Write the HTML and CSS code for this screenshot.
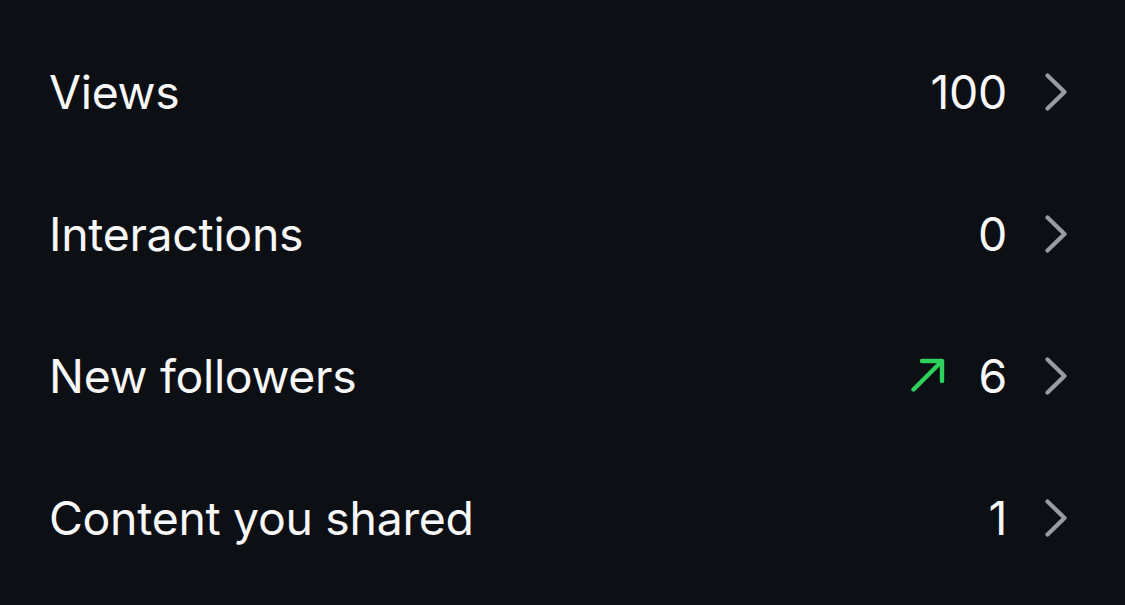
FILE: index.html
```html
<!DOCTYPE html>
<html lang="en">
<head>
    <meta charset="UTF-8">
    <meta name="viewport" content="width=device-width, initial-scale=1.0">
    <title>insights</title>
    <link rel="stylesheet" href="styles.css">
</head>
<body>
    <div class="stats-list">
        <div class="stat-row">
            <span class="stat-label">Views</span>
            <div class="stat-right">
                <span class="stat-value">100</span>
                <svg class="chevron" viewBox="0 0 22 38"><path d="M2.5 2.5 L19.5 19 L2.5 35.5"/></svg>
            </div>
        </div>
        <div class="stat-row">
            <span class="stat-label">Interactions</span>
            <div class="stat-right">
                <span class="stat-value">0</span>
                <svg class="chevron" viewBox="0 0 22 38"><path d="M2.5 2.5 L19.5 19 L2.5 35.5"/></svg>
            </div>
        </div>
        <div class="stat-row">
            <span class="stat-label">New followers</span>
            <div class="stat-right">
                <svg class="trend-up" viewBox="0 0 34 34"><path d="M2.5 31.5 L31 3 M11 3 L31 3 L31 23"/></svg>
                <span class="stat-value">6</span>
                <svg class="chevron" viewBox="0 0 22 38"><path d="M2.5 2.5 L19.5 19 L2.5 35.5"/></svg>
            </div>
        </div>
        <div class="stat-row">
            <span class="stat-label">Content you shared</span>
            <div class="stat-right">
                <span class="stat-value">1</span>
                <svg class="chevron" viewBox="0 0 22 38"><path d="M2.5 2.5 L19.5 19 L2.5 35.5"/></svg>
            </div>
        </div>
    </div>
</body>
</html>
```

FILE: styles.css
```css
body {
    margin: 0;
    background-color: #0c0f14;
    color: #f7f7f8;
    font-family: Inter, "Noto Sans", sans-serif;
}

.stats-list {
    display: flex;
    flex-direction: column;
    padding-top: 21px;
}

.stat-row {
    display: flex;
    align-items: center;
    justify-content: space-between;
    height: 142px;
    padding: 0 58px 0 49px;
}

.stat-label,
.stat-value {
    font-size: 46.4px;
    font-weight: 400;
    letter-spacing: -0.3px;
}

.stat-right {
    display: flex;
    align-items: center;
}

.stat-value {
    margin-right: -2px;
}

.chevron {
    width: 22px;
    height: 38px;
    margin-left: 40px;
    fill: none;
    stroke: #9a9ba1;
    stroke-width: 4.2;
    stroke-linecap: round;
    stroke-linejoin: round;
}

.trend-up {
    width: 34px;
    height: 34px;
    margin-right: 34px;
    margin-top: -2px;
    fill: none;
    stroke: #2fd15d;
    stroke-width: 4.4;
    stroke-linecap: round;
    stroke-linejoin: round;
}
```
